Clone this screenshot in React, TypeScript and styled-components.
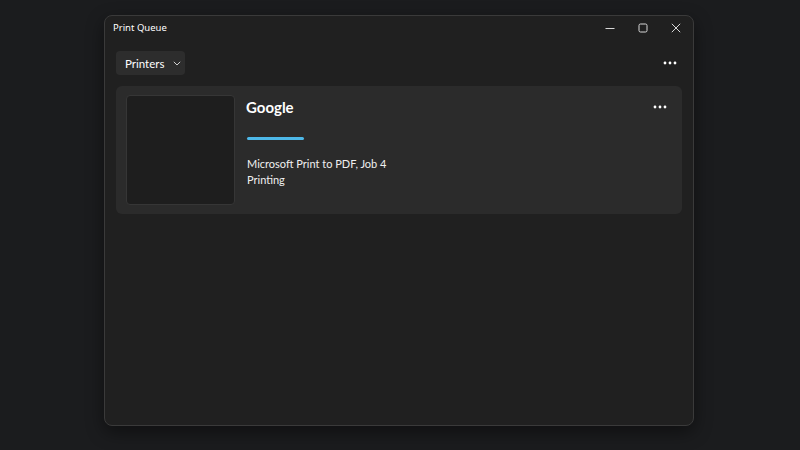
import * as React from 'react';
import styled, {createGlobalStyle} from 'styled-components';

const Global = createGlobalStyle`
  html, body {
    margin: 0;
    padding: 0;
    background: #1b1c1e;
    width: 800px;
    height: 450px;
    overflow: hidden;
  }
  body {
    font-family: Lato, 'Noto Sans', sans-serif;
    color: #ffffff;
    -webkit-font-smoothing: antialiased;
  }
`;

const Desktop = styled.div`
  width: 800px;
  height: 450px;
  padding: 15px 0 0 104px;
  box-sizing: border-box;
`;

const Window = styled.div`
  width: 590px;
  height: 411px;
  background: #202020;
  border: 1px solid #3a3a3a;
  border-radius: 8px;
  box-sizing: border-box;
  box-shadow: 0 6px 18px rgba(0, 0, 0, 0.45);
  display: flex;
  flex-direction: column;
  overflow: hidden;
`;

const TitleBar = styled.div`
  height: 23px;
  display: flex;
  align-items: center;
  padding-left: 8px;
`;

const Title = styled.span`
  flex: 1;
  font-family: 'Noto Sans', sans-serif;
  font-size: 9.5px;
  color: #ffffff;
`;

const Controls = styled.div`
  display: flex;
  height: 100%;
  margin-right: 1px;
`;

const ControlButton = styled.button`
  width: 33px;
  height: 100%;
  border: none;
  background: transparent;
  display: flex;
  align-items: center;
  justify-content: center;
  padding: 0;
`;

const Content = styled.div`
  padding: 12px 11px 0 11px;
  display: flex;
  flex-direction: column;
  gap: 11px;
`;

const Toolbar = styled.div`
  display: flex;
  align-items: center;
  justify-content: space-between;
`;

const DropButton = styled.button`
  height: 24px;
  width: 69px;
  background: #2d2d2d;
  border: none;
  border-radius: 4px;
  color: #ffffff;
  font-family: inherit;
  font-size: 11.5px;
  display: flex;
  align-items: center;
  gap: 9px;
  padding: 0 0 0 9px;
`;

const MoreButton = styled.button<{right: number}>`
  width: 28px;
  height: 24px;
  border: none;
  background: transparent;
  display: flex;
  align-items: center;
  justify-content: center;
  padding: 0;
  margin-right: ${({right}) => right}px;
`;

const Card = styled.div`
  background: #2b2b2b;
  border-radius: 6px;
  height: 128px;
  display: flex;
  padding: 9px 10px;
  box-sizing: border-box;
  gap: 11px;
`;

const Thumb = styled.div`
  width: 109px;
  height: 110px;
  background: #1e1e1e;
  border: 1px solid #363636;
  border-radius: 4px;
  box-sizing: border-box;
  flex-shrink: 0;
`;

const Info = styled.div`
  flex: 1;
  display: flex;
  flex-direction: column;
`;

const Name = styled.div`
  font-size: 15px;
  font-weight: 700;
  margin-top: 2px;
  line-height: 20px;
`;

const Progress = styled.div`
  width: 57px;
  height: 3px;
  border-radius: 2px;
  background: #4db8e8;
  margin-top: 18px;
  margin-left: 1px;
`;

const Details = styled.div`
  margin-top: 16px;
  margin-left: 1px;
  display: flex;
  flex-direction: column;
`;

const Detail = styled.div`
  font-size: 11px;
  line-height: 15.5px;
  color: #f0f0f0;
`;

const CardTop = styled.div`
  display: flex;
  align-items: flex-start;
  justify-content: space-between;
`;

const Dots = () => (
  <svg width="14" height="4" viewBox="0 0 14 4">
    <circle cx="2" cy="2" r="1.4" fill="#ffffff" />
    <circle cx="7" cy="2" r="1.4" fill="#ffffff" />
    <circle cx="12" cy="2" r="1.4" fill="#ffffff" />
  </svg>
);

const Chevron = () => (
  <svg width="8" height="5" viewBox="0 0 8 5">
    <path d="M0.8 0.8 L4 4 L7.2 0.8" stroke="#d0d0d0" strokeWidth="1" fill="none" />
  </svg>
);

export default function App() {
  return (
    <>
      <Global />
      <Desktop>
        <Window>
          <TitleBar>
            <Title>Print Queue</Title>
            <Controls>
              <ControlButton aria-label="Minimize">
                <svg width="10" height="10" viewBox="0 0 10 10">
                  <path d="M0.5 5.5 H9.5" stroke="#d8d8d8" strokeWidth="1" />
                </svg>
              </ControlButton>
              <ControlButton aria-label="Maximize">
                <svg width="10" height="10" viewBox="0 0 10 10">
                  <rect x="1" y="1" width="8" height="8" rx="1.5" stroke="#d8d8d8" strokeWidth="1" fill="none" />
                </svg>
              </ControlButton>
              <ControlButton aria-label="Close">
                <svg width="10" height="10" viewBox="0 0 10 10">
                  <path d="M0.8 0.8 L9.2 9.2 M9.2 0.8 L0.8 9.2" stroke="#d8d8d8" strokeWidth="1" />
                </svg>
              </ControlButton>
            </Controls>
          </TitleBar>
          <Content>
            <Toolbar>
              <DropButton>
                Printers
                <Chevron />
              </DropButton>
              <MoreButton right={-2} aria-label="More">
                <Dots />
              </MoreButton>
            </Toolbar>
            <Card>
              <Thumb />
              <Info>
                <CardTop>
                  <Name>Google</Name>
                  <MoreButton right={-2} aria-label="Job options">
                    <Dots />
                  </MoreButton>
                </CardTop>
                <Progress />
                <Details>
                  <Detail>Microsoft Print to PDF, Job 4</Detail>
                  <Detail>Printing</Detail>
                </Details>
              </Info>
            </Card>
          </Content>
        </Window>
      </Desktop>
    </>
  );
}
